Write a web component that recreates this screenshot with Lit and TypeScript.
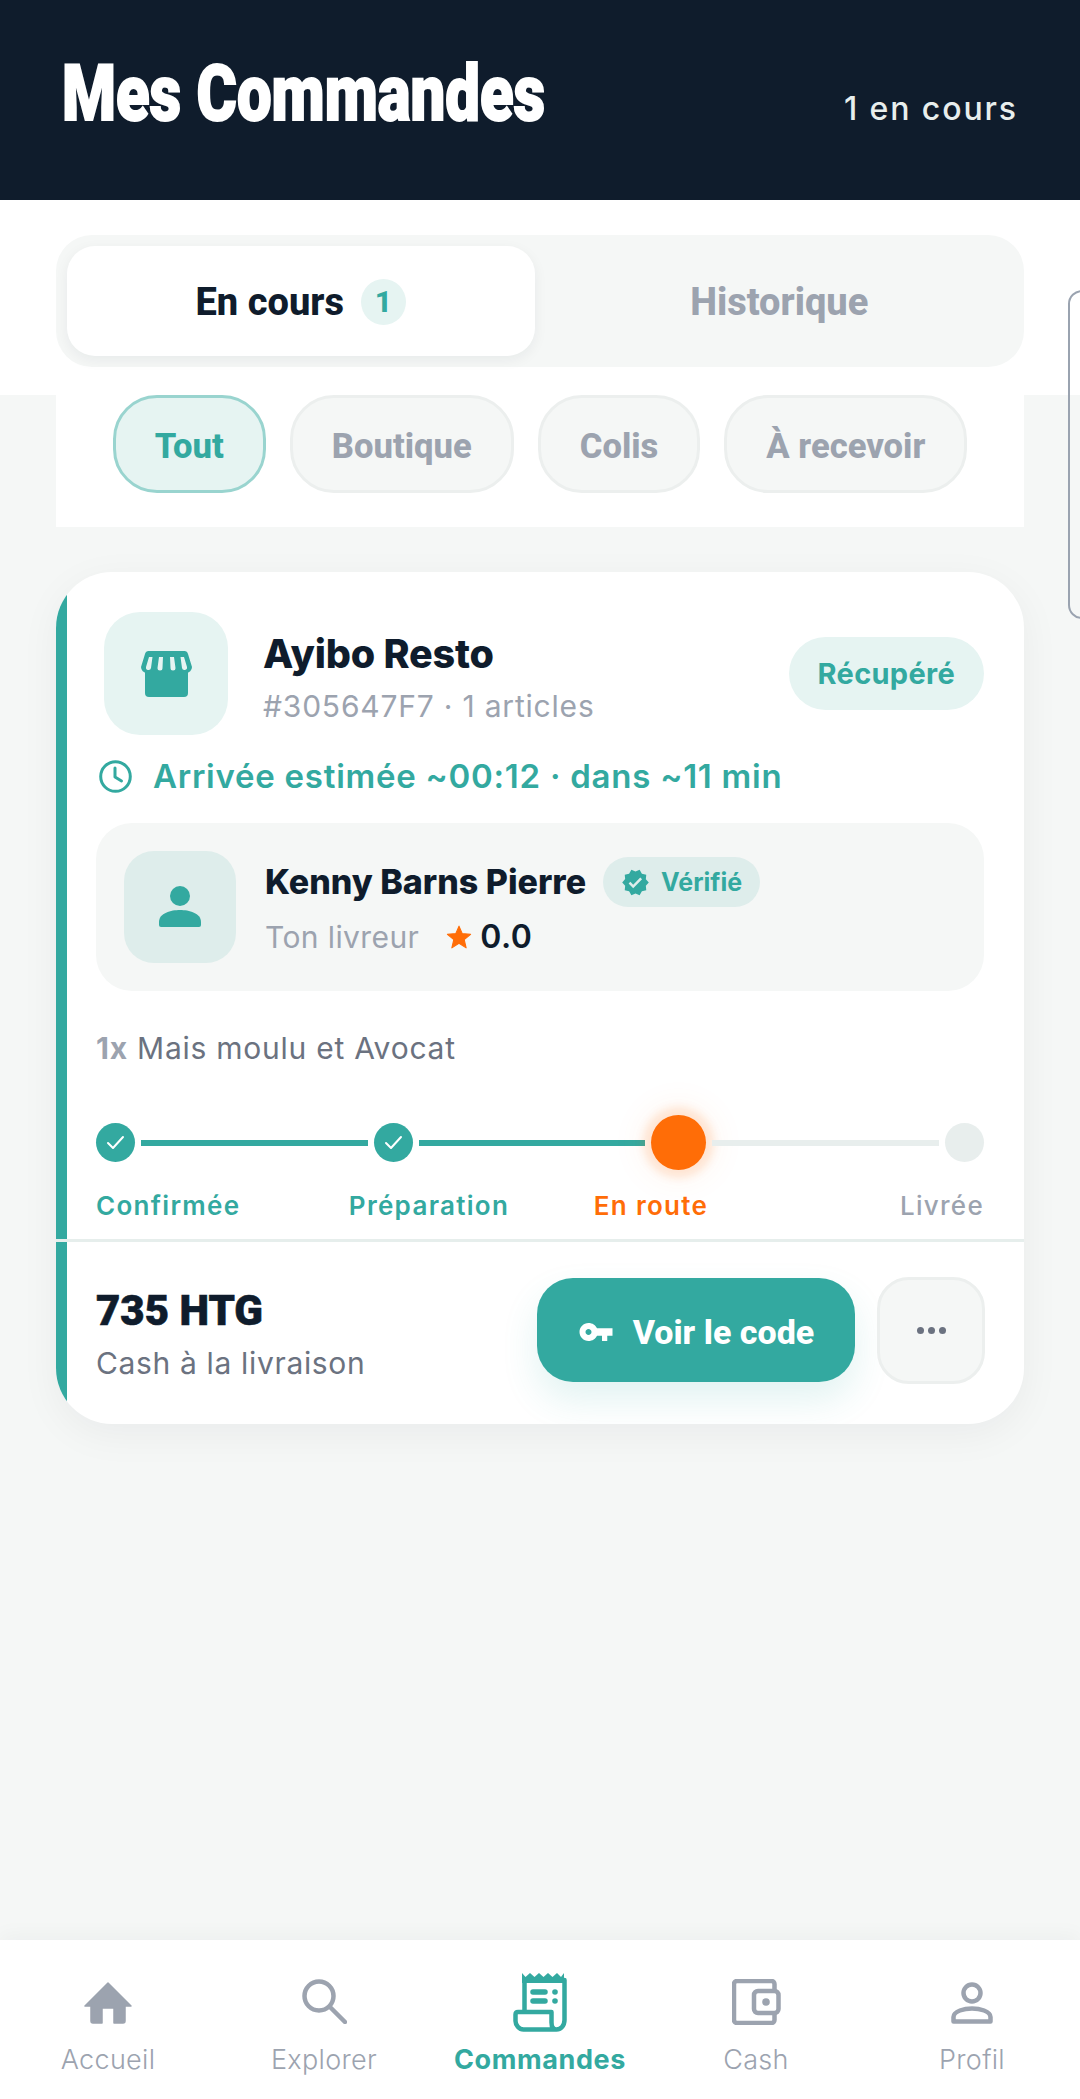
import { LitElement, html, css, svg } from "lit";
import { customElement } from "lit/decorators.js";

const check = svg`<polyline points="12,20 17,25 27,14" fill="none" stroke="#fff" stroke-width="2" stroke-linecap="round" stroke-linejoin="round"/>`;

@customElement("app-root")
export class AppRoot extends LitElement {
  static styles = css`
    :host { display: flex; flex-direction: column; position: relative; width: 1080px; height: 2099px; background: #f5f7f6; font-family: "Inter", sans-serif; color: #0f1c2c; overflow: hidden; }
    * { box-sizing: border-box; }
    svg { display: block; flex: none; }

    .header { height: 200px; background: #0f1c2c; display: flex; justify-content: space-between; padding: 0 62px 0 62px; flex: none; }
    .title { margin: 52px 0 0; font: 900 78px/84px "Roboto", sans-serif; color: #fff; -webkit-text-stroke: 2px #fff; transform: scaleX(.79); transform-origin: left center; white-space: nowrap; }
    .count { margin-top: 90px; font: 500 32px/38px "Inter", sans-serif; color: #e8eeed; letter-spacing: 1.9px; }

    .top { background: #fff; padding: 35px 56px 28px; flex: none; }
    .tabs { display: grid; grid-template-columns: 1fr 1fr; gap: 11px; padding: 11px; height: 132px; background: #f5f7f6; border-radius: 36px; }
    .tab { display: flex; align-items: center; justify-content: center; gap: 17px; padding-top: 2px; border-radius: 28px; font: 800 38px/44px "Roboto", sans-serif; color: #9ca3af; }
    .tab.on { background: #fff; color: #0f1c2c; box-shadow: 0 4px 14px rgba(15,28,44,.06); }
    .num { width: 45px; height: 46px; border-radius: 50%; background: #e6f4f2; color: #33a9a0; display: flex; align-items: center; justify-content: center; font-size: 30px; }

    .filters { margin: 0 56px; padding-bottom: 34px; background: #fff; display: flex; justify-content: center; gap: 24px; flex: none; }
    .chip { height: 98px; padding: 3px 39px 0; border-radius: 44px; border: 3px solid #eceFee; background: #f5f7f6; color: #9ca3af; display: flex; align-items: center; font: 800 34.6px/40px "Roboto", sans-serif; }
    .chip.on { background: #e6f4f2; border-color: #99d4cf; color: #33a9a0; }

    .card { margin: 45px 56px 0; height: 852px; background: #fff; border-radius: 56px; overflow: hidden; box-shadow: 0 10px 40px rgba(15,28,44,.05); flex: none; display: flex; flex-direction: column; }
    .sec { border-left: 11px solid #33a9a0; }
    .upper { padding: 40px 40px 0 29px; height: 667px; }
    .rule { height: 3px; background: #e6eeec; flex: none; }
    .lower { flex: 1; display: flex; align-items: flex-start; padding: 36px 39px 0 29px; }

    .store { display: flex; align-items: center; margin-left: 8px; }
    .storeicon { width: 124px; height: 123px; border-radius: 36px; background: #e6f4f2; display: flex; align-items: center; justify-content: center; }
    .storetext { flex: 1; margin-left: 35px; padding-top: 7px; }
    .name { font: 800 39.5px/48px "Inter", sans-serif; letter-spacing: -.2px; }
    .ref { margin-top: 10px; font: 400 30px/36px "Inter", sans-serif; color: #9ca3af; letter-spacing: .8px; }
    .status { height: 73px; padding: 0 29px; border-radius: 37px; background: #e6f4f2; color: #33a9a0; display: flex; align-items: center; font: 700 29px/36px "Inter", sans-serif; letter-spacing: .3px; }

    .eta { display: flex; align-items: center; gap: 21px; margin: 25px 0 0 3px; height: 32px; color: #33a9a0; font: 600 33px/40px "Inter", sans-serif; letter-spacing: .75px; white-space: nowrap; }

    .driver { margin-top: 31px; height: 168px; border-radius: 36px; background: #f5f7f6; display: flex; align-items: center; padding-left: 28px; gap: 29px; }
    .avatar { width: 112px; height: 112px; border-radius: 30px; background: #deedeb; display: flex; align-items: center; justify-content: center; }
    .line1 { display: flex; align-items: center; gap: 17px; margin-top: -2px; }
    .dname { font: 800 34px/50px "Inter", sans-serif; white-space: nowrap; }
    .verified { height: 50px; padding: 0 18px; border-radius: 25px; background: #deedeb; color: #33a9a0; display: flex; align-items: center; gap: 11px; font: 700 25px/30px "Inter", sans-serif; }
    .line2 { display: flex; align-items: center; margin-top: 12px; font: 400 30px/36px "Inter", sans-serif; color: #9ca3af; letter-spacing: .4px; }
    .star { margin-left: 27px; margin-right: 8px; }
    .rate { font-weight: 600; color: #0f1c2c; font-size: 32px; }

    .items { margin-top: 37px; font: 400 30px/40px "Inter", sans-serif; color: #6b7280; letter-spacing: .75px; }
    .items b { font-weight: 700; color: #9ca3af; }

    .steps { display: flex; align-items: center; gap: 6px; height: 55px; margin-top: 47px; }
    .dot { width: 39px; height: 39px; border-radius: 50%; background: #33a9a0; flex: none; }
    .dot.todo { background: #e8eeed; }
    .dot.now { width: 55px; height: 55px; background: #ff6d07; box-shadow: 0 0 8px 8px rgba(255,109,7,.14), 0 0 30px 14px rgba(255,109,7,.05); }
    .bar { flex: 1; height: 6px; background: #33a9a0; }
    .bar.todo { background: #e8eeed; }
    .labels { display: grid; grid-template-columns: repeat(4, 1fr); margin-top: 20px; font: 600 26px/32px "Inter", sans-serif; letter-spacing: 1.3px; color: #33a9a0; white-space: nowrap; }
    .labels span:nth-child(2), .labels span:nth-child(3) { text-align: center; }
    .labels span:nth-child(3) { color: #ff6d07; }
    .labels span:nth-child(4) { text-align: right; color: #9ca3af; font-weight: 500; }

    .total { flex: 1; margin-top: 8px; }
    .price { font: 900 42px/50px "Roboto", sans-serif; -webkit-text-stroke: .6px #0f1c2c; }
    .pay { margin-top: 7px; font: 400 30px/40px "Inter", sans-serif; color: #6b7280; letter-spacing: .65px; }
    .cta { width: 318px; height: 104px; padding-top: 3px; border-radius: 36px; background: #33a9a0; color: #fff; display: flex; align-items: center; justify-content: center; gap: 19px; font: 800 34px/44px "Roboto", sans-serif; box-shadow: 0 18px 36px rgba(51,169,160,.14); }
    .more { width: 108px; height: 107px; margin-left: 22px; margin-top: -1px; border-radius: 32px; border: 3px solid #eceFee; background: #f5f7f6; display: flex; align-items: center; justify-content: center; gap: 4px; }
    .more i { width: 7px; height: 7px; border-radius: 50%; background: #6b7280; }

    .nav { margin-top: auto; height: 159px; background: #fff; box-shadow: 0 -4px 20px rgba(15,28,44,.04); display: grid; grid-template-columns: repeat(5, 216px); flex: none; }
    .item { display: flex; flex-direction: column; align-items: center; color: #9ca3af; font: 300 27px/34px "Inter", sans-serif; letter-spacing: .3px; }
    .item .ico { height: 92px; margin-bottom: 11px; display: flex; align-items: flex-end; padding-bottom: 8px; }
    .item .ico.tall { padding-bottom: 0; }
    .item .ico.mid { padding-bottom: 7px; }
    .item.on { color: #33a9a0; font-weight: 700; letter-spacing: .6px; }

    .peek { position: absolute; left: 1068px; top: 290px; width: 40px; height: 329px; border: 2px solid #9aa3b0; border-radius: 14px; }
  `;

  render() {
    return html`
      <div class="header">
        <h1 class="title">Mes Commandes</h1>
        <div class="count">1 en cours</div>
      </div>

      <div class="top">
        <div class="tabs">
          <div class="tab on">En cours <span class="num">1</span></div>
          <div class="tab">Historique</div>
        </div>
      </div>

      <div class="filters">
        <div class="chip on">Tout</div>
        <div class="chip">Boutique</div>
        <div class="chip">Colis</div>
        <div class="chip">À recevoir</div>
      </div>

      <div class="card">
        <div class="sec upper">
          <div class="store">
            <div class="storeicon">
              <svg width="51" height="46" viewBox="0 0 51 46">
                <path fill="#33a9a0" d="M4 18h43v24a4 4 0 0 1-4 4H8a4 4 0 0 1-4-4z"/>
                <path fill="#33a9a0" d="M8 0h35a4 4 0 0 1 4 3l4 13a6 6 0 0 1-6 6H6a6 6 0 0 1-6-6L4 3a4 4 0 0 1 4-3z"/>
                <path fill="#e6f4f2" d="M8 6h3.500l-1.500 11a2.500 2.500 0 0 1-5-1zM18 6h4l-.5 11a2.500 2.500 0 0 1-5 0zM29 6h4l1.500 11a2.500 2.500 0 0 1-5 0zM39.500 6H43l3 10a2.500 2.500 0 0 1-5 1z"/>
              </svg>
            </div>
            <div class="storetext">
              <div class="name">Ayibo Resto</div>
              <div class="ref">#305647F7 · 1 articles</div>
            </div>
            <div class="status">Récupéré</div>
          </div>

          <div class="eta">
            <svg width="33" height="33" viewBox="0 0 33 33" fill="none" stroke="#33a9a0" stroke-width="3">
              <circle cx="16.500" cy="16.500" r="14.800"/>
              <path d="M16 8v9l6.500 4" stroke-linecap="round" stroke-linejoin="round"/>
            </svg>
            Arrivée estimée ~00:12 · dans ~11 min
          </div>

          <div class="driver">
            <div class="avatar">
              <svg width="42" height="42" viewBox="0 0 42 42" fill="#33a9a0">
                <circle cx="21" cy="10" r="10"/>
                <path d="M0 36c0-9 12-12 21-12s21 3 21 12v3a2 2 0 0 1-2 2H2a2 2 0 0 1-2-2z"/>
              </svg>
            </div>
            <div>
              <div class="line1">
                <span class="dname">Kenny Barns Pierre</span>
                <span class="verified">
                  <svg width="29" height="29" viewBox="0 0 24 24" fill="#33a9a0"><path d="M23 12l-2.440-2.790.34-3.690-3.610-.82-1.890-3.200L12 2.960 8.600 1.500 6.710 4.690 3.100 5.500l.34 3.700L1 12l2.440 2.790-.34 3.700 3.610.82L8.600 22.500l3.400-1.470 3.400 1.460 1.890-3.190 3.610-.82-.34-3.690L23 12zm-12.910 4.720l-3.800-3.810 1.480-1.480 2.320 2.330 5.850-5.870 1.480 1.480-7.330 7.350z"/></svg>
                  Vérifié
                </span>
              </div>
              <div class="line2">
                Ton livreur
                <svg class="star" width="26" height="26" viewBox="0 0 24 24" fill="#ff6d07" stroke="#ff6d07" stroke-linejoin="round"><path d="M12 17.800 18.600 22l-1.800-7.500L22.700 9.500l-7.700-.6L12 2 9 8.900l-7.700.6 5.900 5L5.400 22z"/></svg>
                <span class="rate">0.0</span>
              </div>
            </div>
          </div>

          <div class="items"><b>1x</b> Mais moulu et Avocat</div>

          <div class="steps">
            <div class="dot"><svg width="39" height="39" viewBox="0 0 39 39">${check}</svg></div>
            <div class="bar"></div>
            <div class="dot"><svg width="39" height="39" viewBox="0 0 39 39">${check}</svg></div>
            <div class="bar"></div>
            <div class="dot now"></div>
            <div class="bar todo"></div>
            <div class="dot todo"></div>
          </div>
          <div class="labels">
            <span>Confirmée</span><span>Préparation</span><span>En route</span><span>Livrée</span>
          </div>
        </div>
        <div class="rule"></div>
        <div class="sec lower">
          <div class="total">
            <div class="price">735 HTG</div>
            <div class="pay">Cash à la livraison</div>
          </div>
          <div class="cta">
            <svg width="36" height="18" viewBox="0 3 24 12" fill="#fff"><path d="M12.650 6.500C11.830 4.500 9.610 3 7 3 3.690 3 1 5.690 1 9s2.690 6 6 6c2.610 0 4.830-1.500 5.650-3.500H16v3.500h3.500v-3.500h3.500v-5H12.650zM7 11c-1.100 0-2-.9-2-2s.9-2 2-2 2 .9 2 2-.9 2-2 2z"/></svg>
            Voir le code
          </div>
          <div class="more"><i></i><i></i><i></i></div>
        </div>
      </div>

      <div class="nav">
        <div class="item">
          <div class="ico"><svg width="48" height="42" viewBox="0 0 48 42" fill="#9ca3af" stroke="#9ca3af" stroke-width="1.500" stroke-linejoin="round"><path d="M24 1 1 24h6v15a2 2 0 0 0 2 2h9V26h12v15h9a2 2 0 0 0 2-2V24h6z"/></svg></div>
          Accueil
        </div>
        <div class="item">
          <div class="ico"><svg width="45" height="45" viewBox="0 0 45 45" fill="none" stroke="#9ca3af" stroke-width="4.500" stroke-linecap="round"><circle cx="17" cy="17" r="14.500"/><path d="M28 28l15 15"/></svg></div>
          Explorer
        </div>
        <div class="item on">
          <div class="ico tall">
            <svg width="54" height="59" viewBox="0 0 54 59" fill="none" stroke="#33a9a0" stroke-width="4.500" stroke-linecap="round" stroke-linejoin="round">
              <path fill="#33a9a0" stroke="none" d="M9 0l3.500 4 4.500-4 4.500 4 4.500-4 4.500 4 4.500-4 4.500 4 4.500-4 4 4 3-4v10H9z"/>
              <path d="M11.500 7V39M51.500 7V47c0 6-4 9.500-8 9.500s-5-3-5-7V39H5c-2 0-2.500 1-2.500 2.500V48c0 4 3.500 8.500 8 8.500H43.500"/>
              <path d="M20 19h12M20 28h12" stroke-width="5.500"/>
              <circle cx="42" cy="19" r="2.800" fill="#33a9a0" stroke="none"/>
              <circle cx="42" cy="28" r="2.800" fill="#33a9a0" stroke="none"/>
            </svg>
          </div>
          Commandes
        </div>
        <div class="item">
          <div class="ico mid"><svg width="49" height="46" viewBox="0 0 49 46" fill="none" stroke="#9ca3af" stroke-width="4.500" stroke-linejoin="round"><path d="M42.500 11V5a3 3 0 0 0-3-3H5a3 3 0 0 0-3 3v36a3 3 0 0 0 3 3h34.500a3 3 0 0 0 3-3v-6"/><rect x="22" y="12" width="24.500" height="22" rx="4"/><circle cx="34" cy="23" r="3.800" fill="#9ca3af" stroke="none"/></svg></div>
          Cash
        </div>
        <div class="item">
          <div class="ico"><svg width="42" height="42" viewBox="0 0 42 42" fill="none" stroke="#9ca3af" stroke-width="4.500" stroke-linejoin="round"><circle cx="21" cy="11" r="8.500"/><path d="M2.500 39.500V35c0-6 11-8.500 18.500-8.500S39.500 29 39.500 35v4.500z"/></svg></div>
          Profil
        </div>
      </div>

      <div class="peek"></div>
    `;
  }
}
